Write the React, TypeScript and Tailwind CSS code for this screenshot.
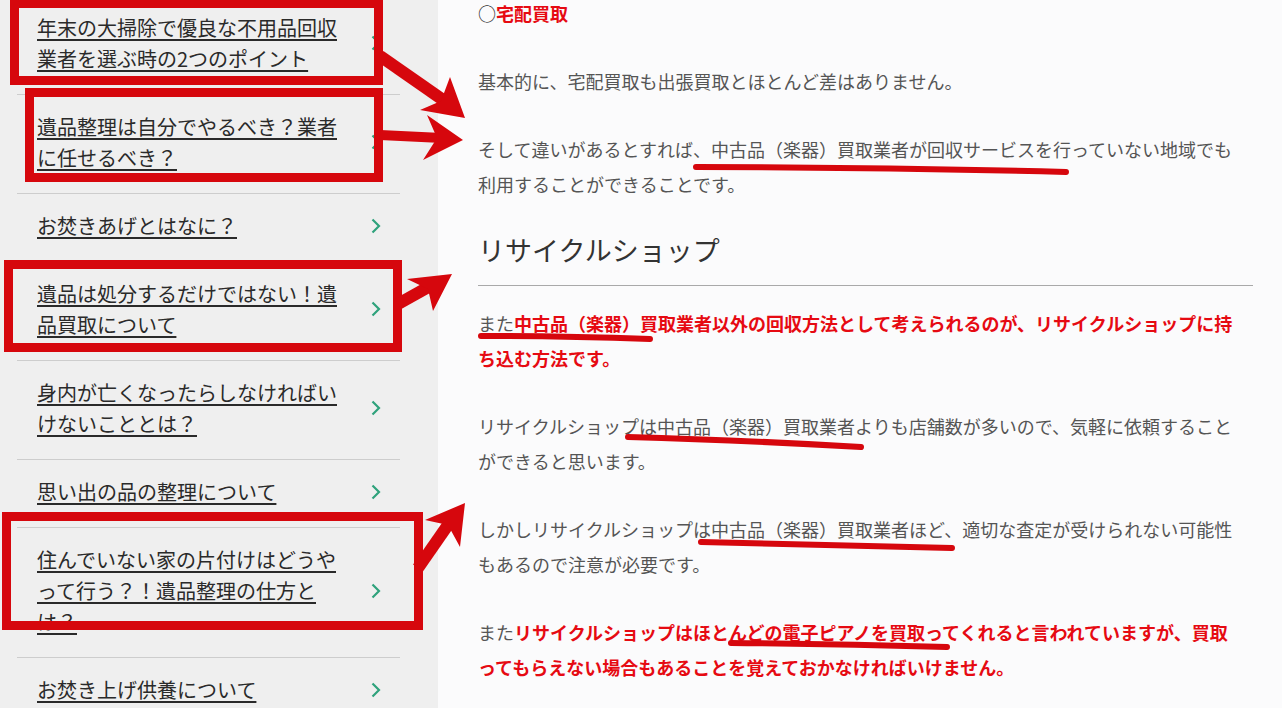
const sideItems = [
  "年末の大掃除で優良な不用品回収業者を選ぶ時の2つのポイント",
  "遺品整理は自分でやるべき？業者に任せるべき？",
  "お焚きあげとはなに？",
  "遺品は処分するだけではない！遺品買取について",
  "身内が亡くなったらしなければいけないこととは？",
  "思い出の品の整理について",
  "住んでいない家の片付けはどうやって行う？！遺品整理の仕方とは？",
  "お焚き上げ供養について",
]

const RED = "#d6070d"

function Chevron() {
  return (
    <svg width="10" height="16" viewBox="0 0 10 16" className="shrink-0">
      <polyline
        points="1.5,1.5 8,8 1.5,14.5"
        fill="none"
        stroke="#2fa27c"
        strokeWidth="2.2"
      />
    </svg>
  )
}

function Sidebar() {
  return (
    <aside className="w-[438px] shrink-0 bg-[#efefef]">
      <ul className="ml-[17px] mt-[-4px] w-[383px]">
        {sideItems.map((t) => (
          <li
            key={t}
            className="flex items-center justify-between border-b border-[#cdcdcd] pb-[20px] pl-[20px] pr-[19px] pt-[16px]"
          >
            <a className="w-[300px] text-[20px] leading-[31px] text-[#2a2a2a] underline underline-offset-[3px]">
              {t}
            </a>
            <Chevron />
          </li>
        ))}
      </ul>
    </aside>
  )
}

function Red({ children }: { children: React.ReactNode }) {
  return <span className="font-bold text-[#e60a12]">{children}</span>
}

function Article() {
  return (
    <main className="flex-1 bg-[#fbfbfc] pl-[40px] text-[18px] leading-[35px] text-[#555]">
      <div className="mt-[-4px] w-[765px]">
        <p className="mb-[33px]">
          <span className="text-[#333]">○</span>
          <Red>宅配買取</Red>
        </p>
        <p className="mb-[33px]">基本的に、宅配買取も出張買取とほとんど差はありません。</p>
        <p className="mb-[33px]">
          そして違いがあるとすれば、中古品（楽器）買取業者が回収サービスを行っていない地域でも利用することができることです。
        </p>
      </div>
      <h2 className="mb-[20px] w-[775px] border-b border-[#a9a9a9] pb-[20px] text-[27px] leading-[30px] text-[#333]">
        リサイクルショップ
      </h2>
      <div className="w-[765px]">
        <p className="mb-[33px]">
          また
          <Red>
            中古品（楽器）買取業者以外の回収方法として考えられるのが、リサイクルショップに持ち込む方法です。
          </Red>
        </p>
        <p className="mb-[33px]">
          リサイクルショップは中古品（楽器）買取業者よりも店舗数が多いので、気軽に依頼することができると思います。
        </p>
        <p className="mb-[33px]">
          しかしリサイクルショップは中古品（楽器）買取業者ほど、適切な査定が受けられない可能性もあるので注意が必要です。
        </p>
        <p className="mb-[33px]">
          また
          <Red>
            リサイクルショップはほとんどの電子ピアノを買取ってくれると言われていますが、買取ってもらえない場合もあることを覚えておかなければいけません。
          </Red>
        </p>
      </div>
    </main>
  )
}

// red hand annotations laid over the screenshot
function Annotations() {
  return (
    <svg
      width="1282"
      height="708"
      viewBox="0 0 1282 708"
      className="pointer-events-none absolute left-0 top-0"
    >
      <g fill="none" stroke={RED} strokeWidth="9">
        <rect x="14.5" y="3.5" width="364" height="77" />
        <rect x="29.5" y="92.5" width="349" height="85" />
        <rect x="8.5" y="264.5" width="389" height="83" />
        <rect x="6.5" y="516.5" width="412" height="109" />
      </g>

      <g stroke={RED} strokeLinecap="butt">
        <line x1="380" y1="56" x2="446" y2="102" strokeWidth="12" />
        <line x1="380" y1="135" x2="442" y2="138" strokeWidth="10" />
        <line x1="398" y1="304" x2="432" y2="285" strokeWidth="12" />
        <line x1="418" y1="568" x2="450" y2="522" strokeWidth="12" />
      </g>
      <g fill={RED}>
        <polygon points="450,77 465,118 420,110 441,101" />
        <polygon points="427,115 463,140 423,160 437,138" />
        <polygon points="407,279 452,274 433,311 428,289" />
        <polygon points="425,520 465,503 460,547 448,525" />
      </g>

      <g fill="none" stroke={RED} strokeWidth="6" strokeLinecap="round">
        <path d="M696 167 Q880 167 1066 172" />
        <path d="M481 336 Q560 336 650 339" />
        <path d="M628 437 Q740 440 861 447" />
        <path d="M701 542 Q820 545 952 548" />
        <path d="M731 643 Q840 644 947 647" />
      </g>
    </svg>
  )
}

export default function App() {
  return (
    <div
      className="relative flex h-[708px] w-[1282px] overflow-hidden"
      style={{ fontFamily: '"Noto Sans CJK JP", "Noto Sans", sans-serif' }}
    >
      <Sidebar />
      <Article />
      <Annotations />
    </div>
  )
}
